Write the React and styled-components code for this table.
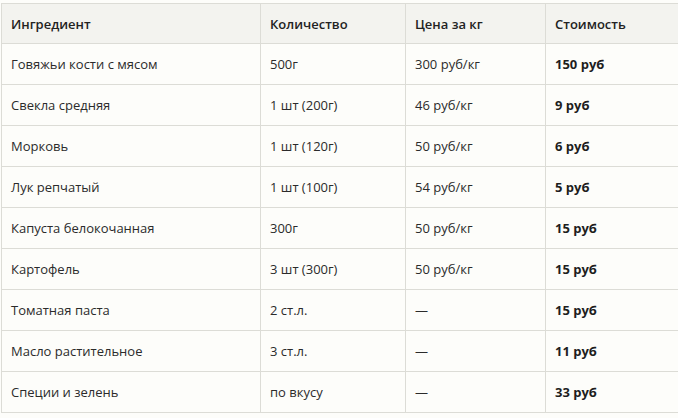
import React from "react";
import styled, { createGlobalStyle } from "styled-components";

const Global = createGlobalStyle`
  html, body { margin: 0; padding: 0; background: #fdfdfa; }
  body { font-family: "Open Sans", "Noto Sans", sans-serif; overflow: hidden; }
`;

const Wrap = styled.div`
  padding: 3px 0 0 1px;
  width: 690px;
`;

const Table = styled.table`
  width: 680px;
  border-collapse: collapse;
  table-layout: fixed;
  font-size: 13px;
  color: #2b2b2b;
`;

const Th = styled.th`
  background: #f3f3ef;
  border: 1px solid #dcdcd6;
  text-align: left;
  font-weight: 600;
  color: #222;
  height: 40px;
  padding: 0 9px;
  box-sizing: border-box;
`;

const Td = styled.td`
  background: #fdfdfa;
  border: 1px solid #dcdcd6;
  height: 40px;
  padding: 0 9px;
  font-weight: ${(p) => (p.$bold ? 700 : 400)};
  color: ${(p) => (p.$bold ? "#1e1e1e" : "#2b2b2b")};
`;

const rows = [
  ["Говяжьи кости с мясом", "500г", "300 руб/кг", "150 руб"],
  ["Свекла средняя", "1 шт (200г)", "46 руб/кг", "9 руб"],
  ["Морковь", "1 шт (120г)", "50 руб/кг", "6 руб"],
  ["Лук репчатый", "1 шт (100г)", "54 руб/кг", "5 руб"],
  ["Капуста белокочанная", "300г", "50 руб/кг", "15 руб"],
  ["Картофель", "3 шт (300г)", "50 руб/кг", "15 руб"],
  ["Томатная паста", "2 ст.л.", "—", "15 руб"],
  ["Масло растительное", "3 ст.л.", "—", "11 руб"],
  ["Специи и зелень", "по вкусу", "—", "33 руб"],
];

export default function App() {
  return (
    <Wrap>
      <Global />
      <Table>
        <colgroup>
          <col style={{ width: 259 }} />
          <col style={{ width: 145 }} />
          <col style={{ width: 140 }} />
          <col />
        </colgroup>
        <thead>
          <tr>
            <Th>Ингредиент</Th>
            <Th>Количество</Th>
            <Th>Цена за кг</Th>
            <Th>Стоимость</Th>
          </tr>
        </thead>
        <tbody>
          {rows.map((r) => (
            <tr key={r[0]}>
              <Td>{r[0]}</Td>
              <Td>{r[1]}</Td>
              <Td>{r[2]}</Td>
              <Td $bold>{r[3]}</Td>
            </tr>
          ))}
        </tbody>
      </Table>
    </Wrap>
  );
}
